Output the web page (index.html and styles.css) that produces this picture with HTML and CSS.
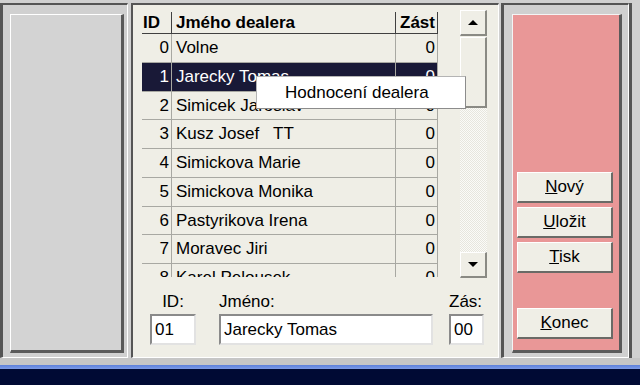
FILE: index.html
```html
<!DOCTYPE html>
<html lang="cs">
<head>
  <meta charset="UTF-8" />
  <title>Dealeri</title>
  <link rel="stylesheet" href="styles.css">
</head>
<body>
  <div class="screen">
    <div class="panes">
      <div class="pane pane-left">
        <div class="blank"></div>
      </div>

      <div class="pane pane-main">
        <div class="list-row">
          <div class="grid">
            <div class="grid-head">
              <span class="c-id">ID</span>
              <span class="c-name">Jmého dealera</span>
              <span class="c-num">Zást</span>
            </div>
            <div class="grid-row"><span class="c-id">0</span><span class="c-name">Volne</span><span class="c-num">0</span></div>
            <div class="grid-row selected"><span class="c-id">1</span><span class="c-name">Jarecky Tomas</span><span class="c-num">0</span></div>
            <div class="grid-row"><span class="c-id">2</span><span class="c-name">Simicek Jaroslav</span><span class="c-num">0</span></div>
            <div class="grid-row"><span class="c-id">3</span><span class="c-name">Kusz Josef   TT</span><span class="c-num">0</span></div>
            <div class="grid-row"><span class="c-id">4</span><span class="c-name">Simickova Marie</span><span class="c-num">0</span></div>
            <div class="grid-row"><span class="c-id">5</span><span class="c-name">Simickova Monika</span><span class="c-num">0</span></div>
            <div class="grid-row"><span class="c-id">6</span><span class="c-name">Pastyrikova Irena</span><span class="c-num">0</span></div>
            <div class="grid-row"><span class="c-id">7</span><span class="c-name">Moravec Jiri</span><span class="c-num">0</span></div>
            <div class="grid-row"><span class="c-id">8</span><span class="c-name">Karel Pelousek</span><span class="c-num">0</span></div>
          </div>

          <div class="scrollbar">
            <div class="sb-btn"><span class="arrow-up"></span></div>
            <div class="sb-thumb"></div>
            <div class="sb-track"></div>
            <div class="sb-btn"><span class="arrow-down"></span></div>
          </div>
        </div>

        <div class="fields">
          <label class="field f-id">
            <span>ID:</span>
            <input type="text" value="01">
          </label>
          <label class="field f-name">
            <span>Jméno:</span>
            <input type="text" value="Jarecky Tomas">
          </label>
          <label class="field f-num">
            <span>Zás:</span>
            <input type="text" value="00">
          </label>
        </div>

        <!-- context menu over the list -->
        <div class="popup">Hodnocení dealera</div>
      </div>

      <div class="pane pane-right">
        <div class="tools">
          <button><u>N</u>ový</button>
          <button><u>U</u>ložit</button>
          <button><u>T</u>isk</button>
          <button class="end"><u>K</u>onec</button>
        </div>
      </div>

      <div class="edge"></div>
    </div>

    <div class="taskbar"></div>
  </div>
</body>
</html>
```

FILE: styles.css
```css
:root {
  --frame: #d0d0d0;
  --dark: #555555;
  --face: #efeee6;
  --pink: #e99797;
  --navy: #000a34;
}

body {
  margin: 0;
  font-family: 'Liberation Sans', Arial, sans-serif;
  font-size: 17px;
  color: #000;
  background: var(--frame);
}

.screen {
  width: 640px;
  height: 385px;
  display: flex;
  flex-direction: column;
  overflow: hidden;
}

.panes {
  height: 358px;
  padding-top: 3px;
  box-sizing: border-box;
  display: flex;
  background: var(--frame);
}

.pane {
  box-sizing: border-box;
  height: 355px;
  border-top: 2px solid var(--dark);
  border-bottom: 1px solid #fff;
}

/* left */
.pane-left {
  width: 128px;
  border-left: 3px solid var(--dark);
  border-right: 1px solid #fff;
  padding: 9px 3px 4px 7px;
  display: flex;
}

.blank {
  flex-grow: 1;
  background: #d3d3d3;
  border-top: 1px solid #fff;
  border-left: 1px solid #fff;
  border-right: 3px solid #5a5a5a;
  border-bottom: 3px solid #5a5a5a;
}

/* middle */
.pane-main {
  position: relative;
  width: 368px;
  margin-left: 3px;
  border-left: 2px solid var(--dark);
  border-right: 1px solid #fff;
  background: var(--face);
  padding: 5px 0 0 9px;
}

.list-row {
  display: flex;
  align-items: flex-start;
}

.grid {
  width: 296px;
  height: 265px;
  margin-top: 2px;
  overflow: hidden;
}

.grid-head,
.grid-row {
  display: grid;
  grid-template-columns: 30px 224px 42px;
}

.grid-head {
  height: 22px;
  box-sizing: border-box;
  border-bottom: 1px solid #404040;
  font-weight: bold;
  line-height: 21px;
}

.grid-head span {
  border-right: 1px solid #404040;
  overflow: hidden;
  white-space: nowrap;
}

.grid-head .c-id {
  padding-left: 1px;
}

.grid-head .c-name {
  padding-left: 4px;
}

.grid-head .c-num {
  padding-left: 4px;
}

.grid-row {
  height: 28.75px;
  box-sizing: border-box;
  border-bottom: 1px solid #a8a8a2;
  line-height: 27px;
}

.grid-row span {
  border-right: 1px solid #a8a8a2;
  white-space: pre;
  overflow: hidden;
}

.grid-row .c-id,
.grid-row .c-num {
  text-align: right;
  padding-right: 2px;
}

.grid-row .c-name {
  padding-left: 4px;
}

.grid-row.selected {
  background: #191937;
  color: #fff;
}

.scrollbar {
  width: 27px;
  height: 268px;
  margin-left: 22px;
  display: flex;
  flex-direction: column;
}

.sb-btn,
.sb-thumb {
  box-sizing: border-box;
  background: var(--face);
  border-top: 1px solid #fff;
  border-left: 1px solid #fff;
  border-right: 2px solid #8a8a84;
  border-bottom: 2px solid #8a8a84;
}

.sb-btn {
  height: 26px;
  display: flex;
  align-items: center;
  justify-content: center;
}

.sb-thumb {
  height: 71px;
  margin-top: 1px;
}

.sb-track {
  flex-grow: 1;
  background: repeating-conic-gradient(#fbfbf8 0 25%, #e7e6de 0 50%) 0 0 / 2px 2px;
}

.arrow-up,
.arrow-down {
  width: 0;
  height: 0;
  border-left: 5px solid transparent;
  border-right: 5px solid transparent;
}

.arrow-up {
  border-bottom: 5px solid #000;
}

.arrow-down {
  border-top: 5px solid #000;
}

.fields {
  display: flex;
  margin: 14px 0 0 8px;
}

.field {
  display: flex;
  flex-direction: column;
}

.field span {
  height: 22px;
  line-height: 20px;
}

.field input {
  box-sizing: border-box;
  height: 31px;
  margin: 0;
  padding: 0 0 0 3px;
  font: inherit;
  color: #000;
  background: #fff;
  border: 2px solid;
  border-color: #8a8a8a #e2e2e2 #e2e2e2 #8a8a8a;
  outline: none;
}

.f-id {
  width: 46px;
  text-align: center;
}

.f-id input {
  width: 46px;
}

.f-name {
  width: 214px;
  margin-left: 22px;
  padding-left: 1px;
}

.f-name input {
  width: 214px;
}

.f-num {
  width: 35px;
  margin-left: 16px;
}

.f-num input {
  width: 35px;
}

.popup {
  position: absolute;
  left: 123px;
  top: 71px;
  width: 210px;
  height: 33px;
  box-sizing: border-box;
  padding-left: 28px;
  line-height: 31px;
  background: #fff;
  border: 1px solid #b4b4b4;
  border-right-color: #8c8c8c;
  border-bottom-color: #8c8c8c;
}

/* right */
.pane-right {
  width: 128px;
  margin-left: 2px;
  border-left: 3px solid var(--dark);
  border-right: 1px solid #fff;
  padding: 9px 6px 4px 8px;
  display: flex;
}

.tools {
  flex-grow: 1;
  background: var(--pink);
  border-top: 1px solid #f4f4f4;
  border-left: 1px solid #f4f4f4;
  border-right: 3px solid #5a5a5a;
  border-bottom: 3px solid #5a5a5a;
  padding: 157px 0 0 4px;
  display: flex;
  flex-direction: column;
  gap: 4px;
}

.tools button {
  width: 96px;
  height: 31px;
  margin: 0;
  padding: 0;
  font: inherit;
  color: #000;
  background: var(--face);
  border: none;
  border-top: 1px solid #fff;
  border-left: 1px solid #fff;
  border-right: 2px solid #6a6a66;
  border-bottom: 2px solid #6a6a66;
}

.tools button.end {
  margin-top: 31px;
}

.edge {
  flex-grow: 1;
  border-left: 3px solid var(--dark);
}

.taskbar {
  flex-grow: 1;
  border-top: 7px solid #c6c6c6;
  background: linear-gradient(#5d80dc 0, #7d9be6 4px, var(--navy) 4px);
}
```
